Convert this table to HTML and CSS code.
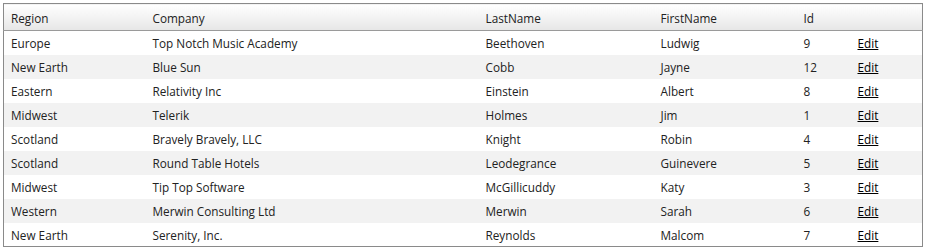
FILE: index.html
```html
<!DOCTYPE html>
<html>
<head>
<meta charset="utf-8">
<link rel="stylesheet" href="styles.css">
</head>
<body>
<table class="grid">
  <colgroup>
    <col class="c-region"><col class="c-company"><col class="c-last"><col class="c-first"><col class="c-id"><col class="c-edit">
  </colgroup>
  <thead>
    <tr><th>Region</th><th>Company</th><th>LastName</th><th>FirstName</th><th>Id</th><th></th></tr>
  </thead>
  <tbody>
    <tr><td>Europe</td><td>Top Notch Music Academy</td><td>Beethoven</td><td>Ludwig</td><td>9</td><td><a href="#">Edit</a></td></tr>
    <tr class="alt"><td>New Earth</td><td>Blue Sun</td><td>Cobb</td><td>Jayne</td><td>12</td><td><a href="#">Edit</a></td></tr>
    <tr><td>Eastern</td><td>Relativity Inc</td><td>Einstein</td><td>Albert</td><td>8</td><td><a href="#">Edit</a></td></tr>
    <tr class="alt"><td>Midwest</td><td>Telerik</td><td>Holmes</td><td>Jim</td><td>1</td><td><a href="#">Edit</a></td></tr>
    <tr><td>Scotland</td><td>Bravely Bravely, LLC</td><td>Knight</td><td>Robin</td><td>4</td><td><a href="#">Edit</a></td></tr>
    <tr class="alt"><td>Scotland</td><td>Round Table Hotels</td><td>Leodegrance</td><td>Guinevere</td><td>5</td><td><a href="#">Edit</a></td></tr>
    <tr><td>Midwest</td><td>Tip Top Software</td><td>McGillicuddy</td><td>Katy</td><td>3</td><td><a href="#">Edit</a></td></tr>
    <tr class="alt"><td>Western</td><td>Merwin Consulting Ltd</td><td>Merwin</td><td>Sarah</td><td>6</td><td><a href="#">Edit</a></td></tr>
    <tr><td>New Earth</td><td>Serenity, Inc.</td><td>Reynolds</td><td>Malcom</td><td>7</td><td><a href="#">Edit</a></td></tr>
  </tbody>
</table>
</body>
</html>
```
FILE: styles.css
```css
html, body { margin: 0; padding: 0; background: #fff; }
body { padding: 3px; font-family: "Open Sans", "Noto Sans", sans-serif; font-size: 11.75px; color: #222; }
.grid { border-collapse: collapse; width: 920px; border: 1px solid #8a8a8a; table-layout: fixed; }
.c-region { width: 142px; }
.c-company { width: 333px; }
.c-last { width: 175px; }
.c-first { width: 143px; }
.c-id { width: 54px; }
.c-edit { width: auto; }
.grid th { text-align: left; font-weight: normal; height: 25px; padding: 1px 0 0 7px; background: linear-gradient(#ffffff, #e6e6e6); border-bottom: 1px solid #9a9a9a; color: #222; }
.grid td { height: 24px; padding: 1px 0 0 7px; box-sizing: border-box; white-space: nowrap; }
.grid tr.alt td { background: #f2f2f2; }
.grid a { color: #000; text-decoration: underline; }
```
